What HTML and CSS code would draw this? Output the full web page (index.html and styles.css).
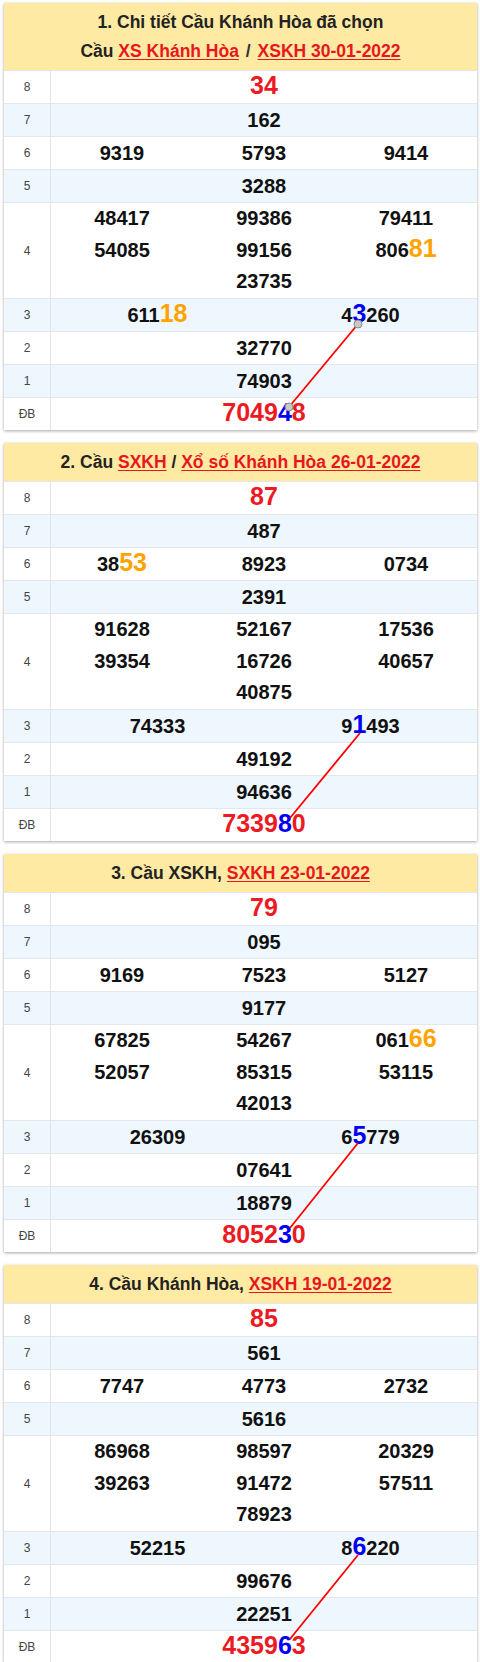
FILE: index.html
```html
<!DOCTYPE html>
<html lang="vi">
<head>
<meta charset="utf-8">
<title>Cầu Khánh Hòa</title>
<link rel="stylesheet" href="styles.css">
</head>
<body>

<div class="card">
  <div class="head">
    <div>1. Chi tiết Cầu Khánh Hòa đã chọn</div>
    <div>Cầu <a href="#">XS Khánh Hòa</a> <span class="sep">/</span> <a href="#">XSKH 30-01-2022</a></div>
  </div>
  <div class="row"><div class="lbl">8</div><div class="vals"><span class="big red">34</span></div></div>
  <div class="row alt"><div class="lbl">7</div><div class="vals">162</div></div>
  <div class="row"><div class="lbl">6</div><div class="vals three"><span>9319</span><span>5793</span><span>9414</span></div></div>
  <div class="row alt"><div class="lbl">5</div><div class="vals">3288</div></div>
  <div class="row tall"><div class="lbl">4</div><div class="vals three">
    <div class="stack"><span>48417</span><span>54085</span></div>
    <div class="stack"><span>99386</span><span>99156</span><span>23735</span></div>
    <div class="stack"><span>79411</span><span>806<b class="big orange">81</b></span></div>
  </div></div>
  <div class="row alt"><div class="lbl">3</div><div class="vals two"><span>611<b class="big orange">18</b></span><span>4<b class="big blue">3</b>260</span></div></div>
  <div class="row"><div class="lbl">2</div><div class="vals">32770</div></div>
  <div class="row alt"><div class="lbl">1</div><div class="vals">74903</div></div>
  <div class="row"><div class="lbl">ĐB</div><div class="vals"><span class="big red">7049<b class="blue">4</b>8</span></div></div>
  <svg class="bridge" viewBox="0 0 473 427" width="473" height="427">
    <line x1="354" y1="321" x2="285" y2="404" stroke="#ff0000" stroke-width="1.8"/>
    <circle cx="354" cy="321" r="4" fill="#c9c9c9" stroke="#8a8a8a" stroke-width="1"/>
    <circle cx="285" cy="404" r="4" fill="#c9c9c9" stroke="#8a8a8a" stroke-width="1"/>
  </svg>
</div>

<div class="card">
  <div class="head">
    <div>2. Cầu <a href="#">SXKH</a> / <a href="#">Xổ số Khánh Hòa 26-01-2022</a></div>
  </div>
  <div class="row"><div class="lbl">8</div><div class="vals"><span class="big red">87</span></div></div>
  <div class="row alt"><div class="lbl">7</div><div class="vals">487</div></div>
  <div class="row"><div class="lbl">6</div><div class="vals three"><span>38<b class="big orange">53</b></span><span>8923</span><span>0734</span></div></div>
  <div class="row alt"><div class="lbl">5</div><div class="vals">2391</div></div>
  <div class="row tall"><div class="lbl">4</div><div class="vals three">
    <div class="stack"><span>91628</span><span>39354</span></div>
    <div class="stack"><span>52167</span><span>16726</span><span>40875</span></div>
    <div class="stack"><span>17536</span><span>40657</span></div>
  </div></div>
  <div class="row alt"><div class="lbl">3</div><div class="vals two"><span>74333</span><span>9<b class="big blue">1</b>493</span></div></div>
  <div class="row"><div class="lbl">2</div><div class="vals">49192</div></div>
  <div class="row alt"><div class="lbl">1</div><div class="vals">94636</div></div>
  <div class="row"><div class="lbl">ĐB</div><div class="vals"><span class="big red">7339<b class="blue">8</b>0</span></div></div>
  <svg class="bridge" viewBox="0 0 473 398" width="473" height="398">
    <line x1="356" y1="290" x2="286" y2="375" stroke="#ff0000" stroke-width="1.8"/>
  </svg>
</div>

<div class="card">
  <div class="head">
    <div>3. Cầu XSKH, <a href="#">SXKH 23-01-2022</a></div>
  </div>
  <div class="row"><div class="lbl">8</div><div class="vals"><span class="big red">79</span></div></div>
  <div class="row alt"><div class="lbl">7</div><div class="vals">095</div></div>
  <div class="row"><div class="lbl">6</div><div class="vals three"><span>9169</span><span>7523</span><span>5127</span></div></div>
  <div class="row alt"><div class="lbl">5</div><div class="vals">9177</div></div>
  <div class="row tall"><div class="lbl">4</div><div class="vals three">
    <div class="stack"><span>67825</span><span>52057</span></div>
    <div class="stack"><span>54267</span><span>85315</span><span>42013</span></div>
    <div class="stack"><span>061<b class="big orange">66</b></span><span>53115</span></div>
  </div></div>
  <div class="row alt"><div class="lbl">3</div><div class="vals two"><span>26309</span><span>6<b class="big blue">5</b>779</span></div></div>
  <div class="row"><div class="lbl">2</div><div class="vals">07641</div></div>
  <div class="row alt"><div class="lbl">1</div><div class="vals">18879</div></div>
  <div class="row"><div class="lbl">ĐB</div><div class="vals"><span class="big red">8052<b class="blue">3</b>0</span></div></div>
  <svg class="bridge" viewBox="0 0 473 398" width="473" height="398">
    <line x1="354" y1="289" x2="286" y2="374" stroke="#ff0000" stroke-width="1.8"/>
  </svg>
</div>

<div class="card">
  <div class="head">
    <div>4. Cầu Khánh Hòa, <a href="#">XSKH 19-01-2022</a></div>
  </div>
  <div class="row"><div class="lbl">8</div><div class="vals"><span class="big red">85</span></div></div>
  <div class="row alt"><div class="lbl">7</div><div class="vals">561</div></div>
  <div class="row"><div class="lbl">6</div><div class="vals three"><span>7747</span><span>4773</span><span>2732</span></div></div>
  <div class="row alt"><div class="lbl">5</div><div class="vals">5616</div></div>
  <div class="row tall"><div class="lbl">4</div><div class="vals three">
    <div class="stack"><span>86968</span><span>39263</span></div>
    <div class="stack"><span>98597</span><span>91472</span><span>78923</span></div>
    <div class="stack"><span>20329</span><span>57511</span></div>
  </div></div>
  <div class="row alt"><div class="lbl">3</div><div class="vals two"><span>52215</span><span>8<b class="big blue">6</b>220</span></div></div>
  <div class="row"><div class="lbl">2</div><div class="vals">99676</div></div>
  <div class="row alt"><div class="lbl">1</div><div class="vals">22251</div></div>
  <div class="row"><div class="lbl">ĐB</div><div class="vals"><span class="big red">4359<b class="blue">6</b>3</span></div></div>
  <svg class="bridge" viewBox="0 0 473 398" width="473" height="398">
    <line x1="354" y1="290" x2="286" y2="374" stroke="#ff0000" stroke-width="1.8"/>
  </svg>
</div>

</body>
</html>
```

FILE: styles.css
```css
html, body {
  margin: 0;
  padding: 0;
  background: #ffffff;
}

body {
  font-family: "Liberation Sans", Arial, sans-serif;
  color: #111;
  padding: 3px 3px 0 4px;
}

.card {
  position: relative;
  background: #fff;
  box-shadow: 0 1px 3px rgba(0, 0, 0, 0.35);
  margin-bottom: 13px;
}

.card:last-child {
  margin-bottom: 0;
}

.head {
  background: #feeaa2;
  text-align: center;
  font-weight: bold;
  font-size: 17.5px;
  line-height: 29px;
  padding: 4.5px 0;
  color: #222;
}

.head a {
  color: #e8161e;
  text-decoration: underline;
  text-underline-offset: 2px;
}

.head .sep {
  color: #333;
  padding: 0 2px;
}

.row {
  display: grid;
  grid-template-columns: 47px 1fr;
  grid-template-rows: 32px;
  border-top: 1px solid #e3e6ea;
  line-height: 32px;
  overflow: visible;
}

.row.tall {
  grid-template-rows: 95px;
}

.row.alt {
  background: #eef6fe;
}

.lbl {
  border-right: 1px solid #e3e3e3;
  text-align: center;
  font-size: 12px;
  color: #444;
  display: flex;
  align-items: center;
  justify-content: center;
}

.vals {
  text-align: center;
  font-weight: bold;
  font-size: 20px;
  color: #111;
}

.vals.three {
  display: grid;
  grid-template-columns: 1fr 1fr 1fr;
}

.vals.two {
  display: grid;
  grid-template-columns: 1fr 1fr;
}

.stack {
  display: flex;
  flex-direction: column;
  line-height: 31.7px;
}

.big {
  font-size: 25px;
  line-height: 20px;
  vertical-align: baseline;
}

.red {
  color: #ec1a23;
}

.orange {
  color: #ffa300;
}

.blue {
  color: #0000f5;
}

b {
  font-weight: bold;
}

.bridge {
  position: absolute;
  left: 0;
  top: 0;
  pointer-events: none;
}
```
